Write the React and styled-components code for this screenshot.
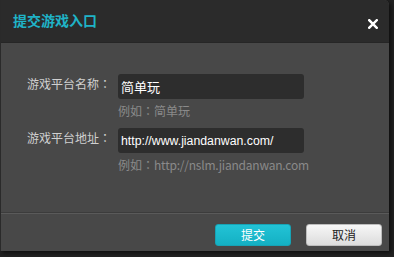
import React from "react";
import styled, { createGlobalStyle } from "styled-components";

const Global = createGlobalStyle`
  html, body { margin: 0; padding: 0; background: #222; }
  body { width: 394px; height: 257px; overflow: hidden; font-family: "Noto Sans CJK SC", "Liberation Sans", sans-serif; }
`;

const Dialog = styled.div`
  width: 388px;
  height: 251px;
  background: #484848;
  border-left: 1px solid #2a2a2a;
  border-radius: 0 5px 0 0;
  box-shadow: 2px 2px 4px rgba(0,0,0,0.6);
  display: flex;
  flex-direction: column;
  overflow: hidden;
`;

const Header = styled.div`
  height: 42px;
  flex: none;
  background: #2b2b2b;
  border-bottom: 1px solid #262626;
  display: flex;
  align-items: center;
  justify-content: space-between;
  padding: 0 11px 0 12px;
`;

const Title = styled.h1`
  margin: 0;
  font-size: 14px;
  font-weight: bold;
  color: #1fb3c7;
  line-height: 18px;
  margin-top: -2px;
`;

const CloseIcon = styled.svg`
  width: 10px;
  height: 10px;
  margin-top: 5px;
  display: block;
`;

const Body = styled.div`
  flex: 1;
  padding: 31px 0 0 26px;
  border-bottom: 1px solid #3c3c3c;
  display: flex;
  flex-direction: column;
  gap: 8px;
`;

const Row = styled.div`
  display: flex;
  align-items: flex-start;
`;

const Label = styled.label`
  width: 91px;
  font-size: 12px;
  line-height: 25px;
  color: #d0d0d0;
  margin-top: -3px;
`;

const Colon = styled.span`
  font-family: "Noto Sans CJK JP", sans-serif;
`;

const Field = styled.div`
  display: flex;
  flex-direction: column;
`;

const Input = styled.div`
  width: 186px;
  height: 25px;
  box-sizing: border-box;
  background: #2d2d2d;
  border-radius: 3px;
  padding: 0 3px;
  display: flex;
  align-items: center;
  color: #fff;
  font-family: ${(p) => (p.$latin ? '"Liberation Sans", Arial, sans-serif' : '"Noto Sans CJK SC", sans-serif')};
  font-size: ${(p) => (p.$latin ? "12.3px" : "13px")};
`;

const Hint = styled.div`
  font-size: 12px;
  line-height: 18px;
  color: #8a8a8a;
  margin-top: 3px;
  white-space: nowrap;
`;

const HintUrl = styled.span`
  letter-spacing: -0.22px;
`;

const Footer = styled.div`
  height: 38px;
  flex: none;
  border-top: 1px solid #5a5a5a;
  display: flex;
  justify-content: flex-end;
  align-items: flex-start;
  gap: 15px;
  padding: 10px 7px 0 0;
  box-sizing: border-box;
`;

const Button = styled.button`
  width: 76px;
  height: 22px;
  border-radius: 3px;
  font-family: "Noto Sans CJK SC", sans-serif;
  font-size: 12px;
  line-height: 20px;
  padding: 0;
  cursor: pointer;
  border: 1px solid ${(p) => (p.$primary ? "#16a3b5" : "#bdbdbd")};
  color: ${(p) => (p.$primary ? "#fff" : "#222")};
  background: ${(p) =>
    p.$primary
      ? "linear-gradient(#22c3d6, #14b0c3)"
      : "linear-gradient(#f7f7f7, #dcdcdc)"};
`;

export default function App() {
  return (
    <>
      <Global />
      <Dialog>
        <Header>
          <Title>提交游戏入口</Title>
          <CloseIcon viewBox="0 0 10 10">
            <path d="M1.2 1.2 L8.8 8.8 M8.8 1.2 L1.2 8.8" stroke="#fff" strokeWidth="2.4" strokeLinecap="square" />
          </CloseIcon>
        </Header>
        <Body>
          <Row>
            <Label>游戏平台名称<Colon>：</Colon></Label>
            <Field>
              <Input>简单玩</Input>
              <Hint>例如<Colon>：</Colon>简单玩</Hint>
            </Field>
          </Row>
          <Row>
            <Label>游戏平台地址<Colon>：</Colon></Label>
            <Field>
              <Input $latin>http://www.jiandanwan.com/</Input>
              <Hint>例如<Colon>：</Colon><HintUrl>http://nslm.jiandanwan.com</HintUrl></Hint>
            </Field>
          </Row>
        </Body>
        <Footer>
          <Button $primary>提交</Button>
          <Button>取消</Button>
        </Footer>
      </Dialog>
    </>
  );
}
